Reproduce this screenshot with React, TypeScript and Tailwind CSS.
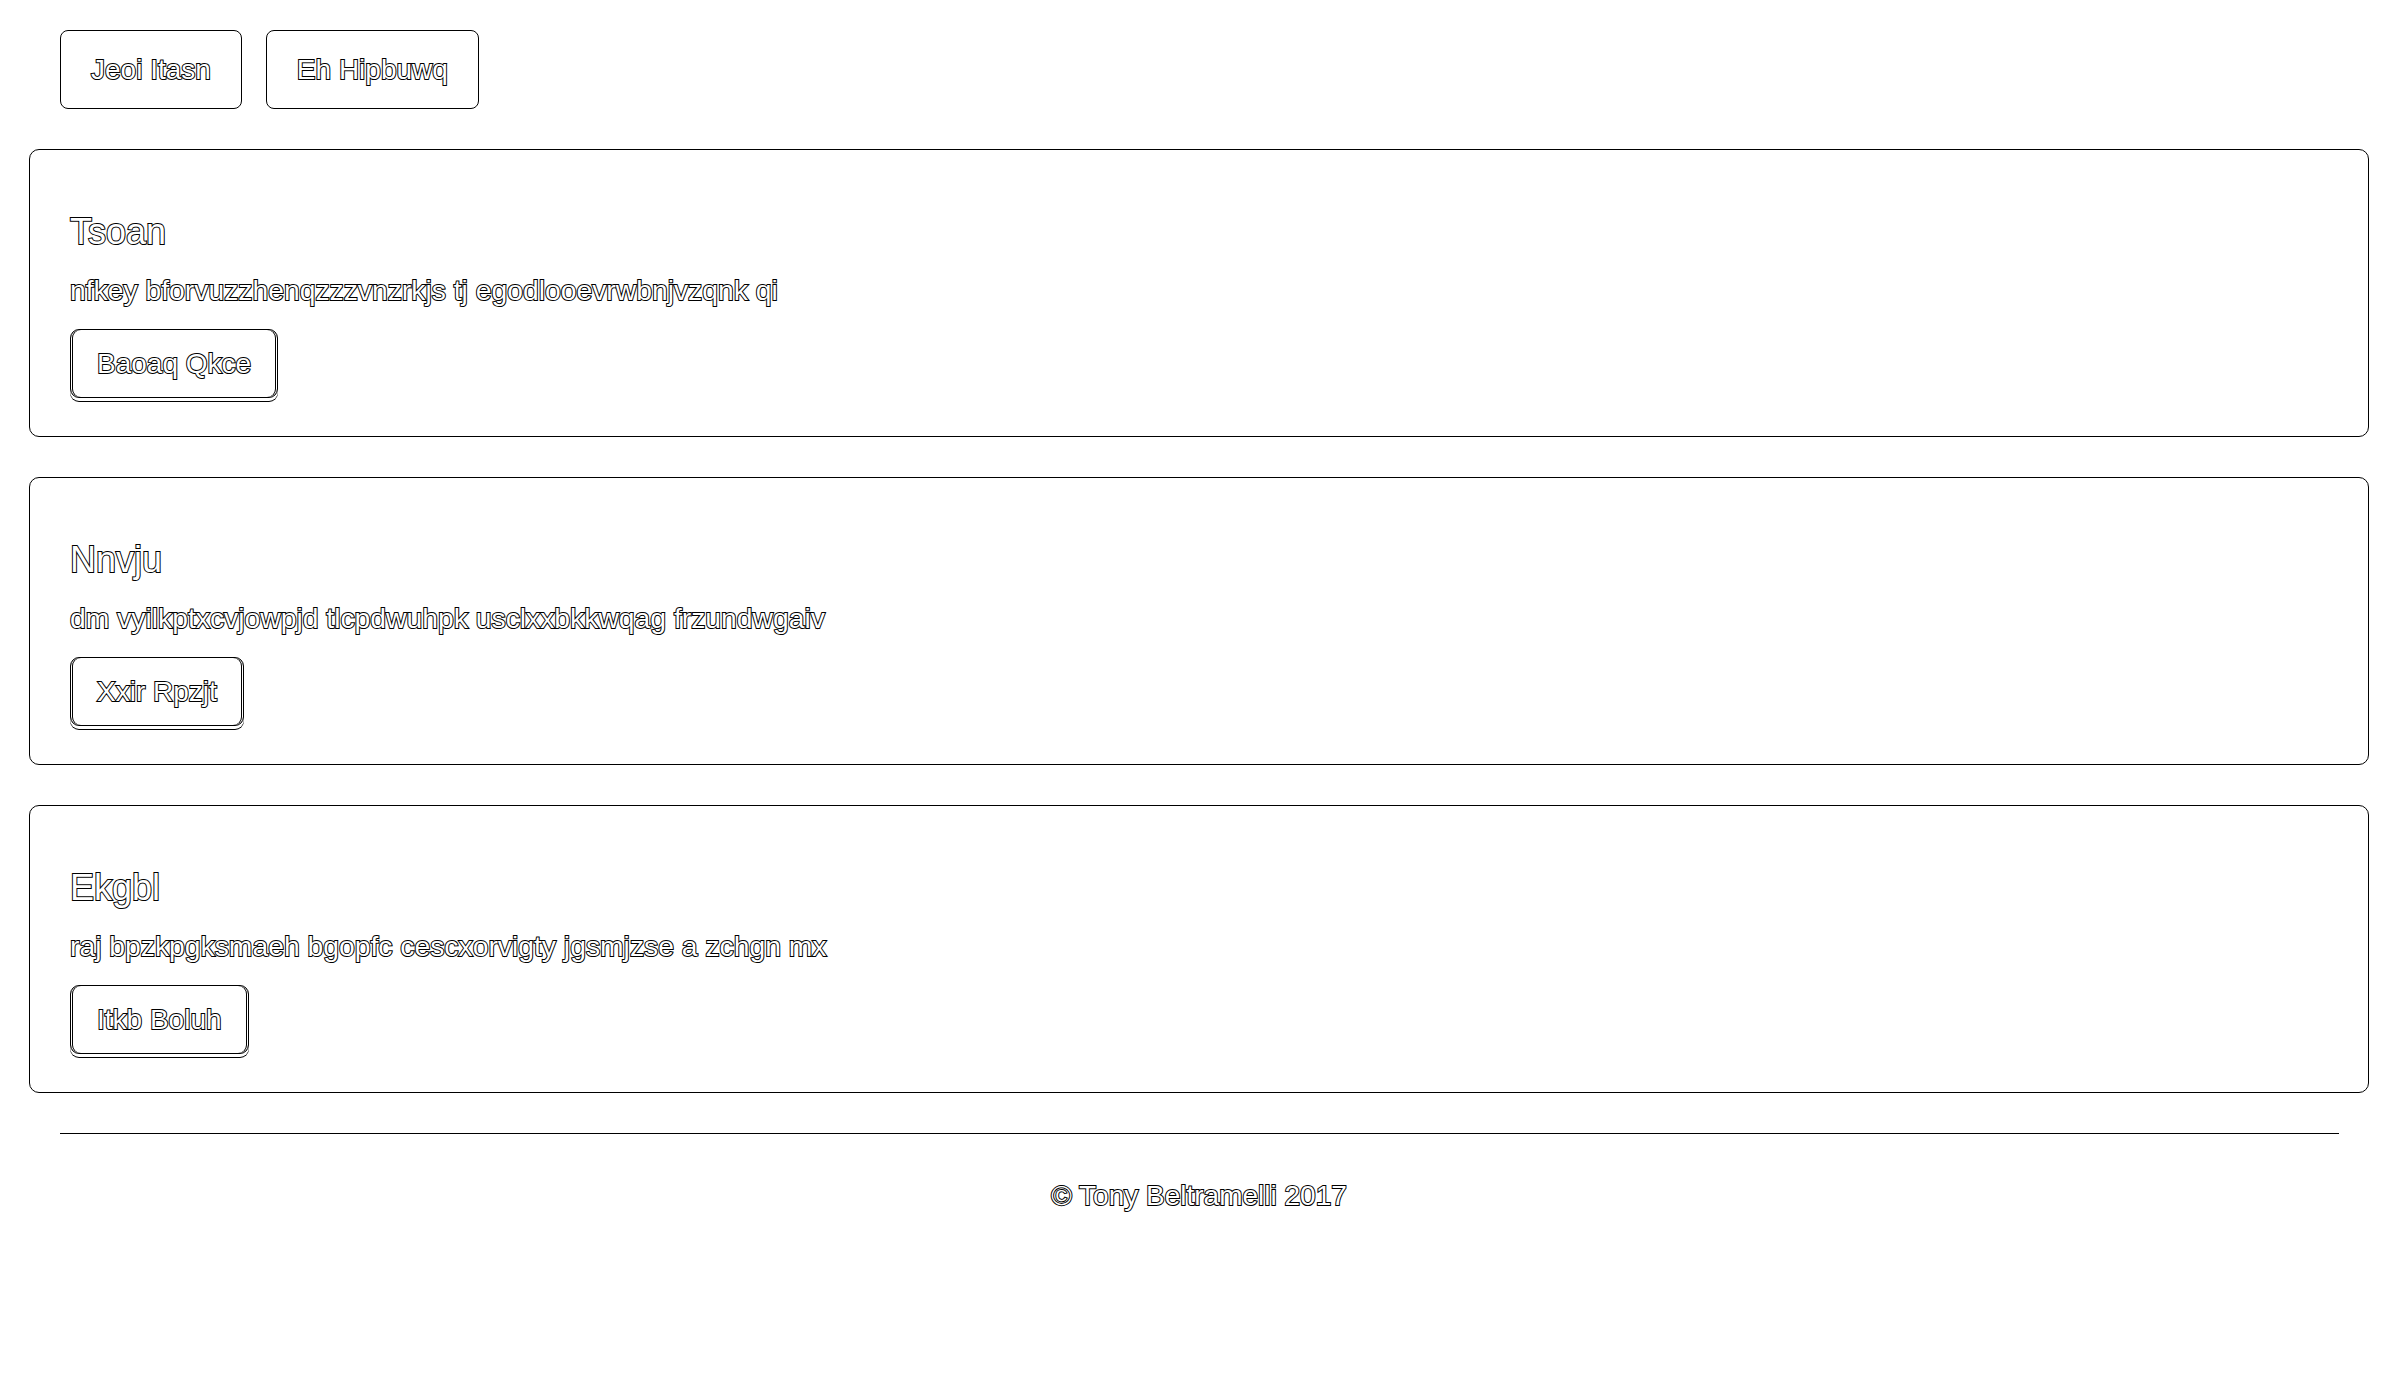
import React from 'react';

const cards = [
  {
    title: 'Tsoan',
    text: 'nfkey bforvuzzhenqzzzvnzrkjs tj egodlooevrwbnjvzqnk qi',
    action: 'Baoaq Qkce',
  },
  {
    title: 'Nnvju',
    text: 'dm vyilkptxcvjowpjd tlcpdwuhpk usclxxbkkwqag frzundwgaiv',
    action: 'Xxir Rpzjt',
  },
  {
    title: 'Ekgbl',
    text: 'raj bpzkpgksmaeh bgopfc cescxorvigty jgsmjzse a zchgn mx',
    action: 'Itkb Boluh',
  },
];

const NavButton: React.FC<{ label: string }> = ({ label }) => (
  <button className="h-[79px] px-[30px] flex items-center rounded-[8px] border border-black bg-white">
    {label}
  </button>
);

const Card: React.FC<{ title: string; text: string; action: string }> = ({ title, text, action }) => (
  <div className="mt-[40px] h-[288px] rounded-[10px] border border-black px-[40px] pt-[62px]">
    <h3 className="text-[36px] leading-[40px]">{title}</h3>
    <p className="mt-[18px] text-[28.3px]">{text}</p>
    <button className="mt-[19px] h-[69px] px-[26px] flex items-center rounded-[9px] border border-black bg-white shadow-[inset_1px_0_0_0_#fff,inset_-1px_0_0_0_#fff,inset_2px_0_0_0_#000,inset_-2px_0_0_0_#000,0_3px_0_0_#fff,0_4px_0_0_#000]">
      {action}
    </button>
  </div>
);

export default function App() {
  return (
    <div className="min-h-screen bg-white font-['Liberation_Sans',Arial,sans-serif] text-[28px] leading-[40px] text-white [-webkit-text-stroke:2px_#000] [paint-order:stroke_fill] [-webkit-font-smoothing:antialiased]">
      <div className="ml-[29px] w-[2340px] pt-[30px]">
        <div className="flex gap-[24px] px-[31px]">
          <NavButton label="Jeoi Itasn" />
          <NavButton label="Eh Hipbuwq" />
        </div>

        {cards.map((c) => (
          <Card key={c.title} {...c} />
        ))}

        <div className="mt-[40px] ml-[31px] mr-[30px] border-t border-black" />

        <footer className="mt-[42px] text-center">
          <p>© Tony Beltramelli 2017</p>
        </footer>
      </div>
    </div>
  );
}
